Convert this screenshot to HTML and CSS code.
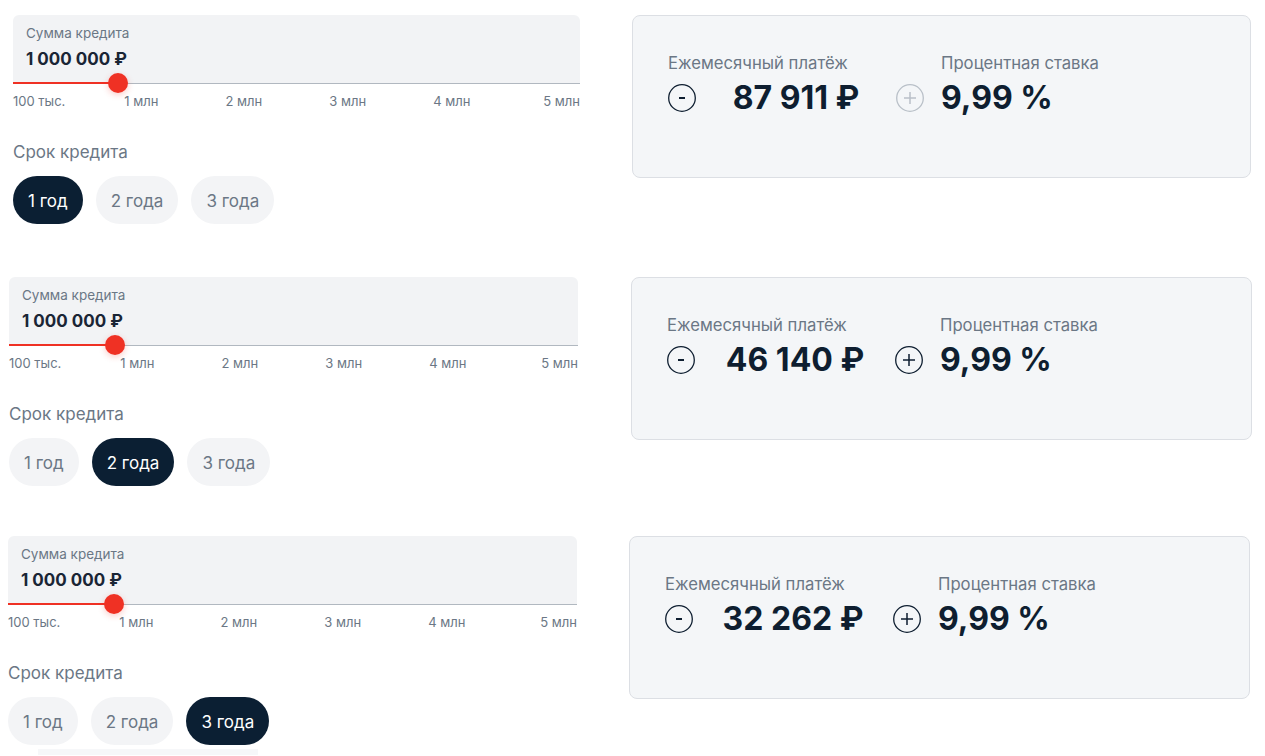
FILE: index.html
```html
<!DOCTYPE html>
<html lang="ru">
<head>
<meta charset="utf-8">
<title>Кредитный калькулятор</title>
<link rel="stylesheet" href="styles.css">
</head>
<body>
<main class="page">

  <section class="calc calc--one">
    <div class="form">
      <div class="amount">
        <div class="amount-label">Сумма кредита</div>
        <div class="amount-value">1 000 000 ₽</div>
        <div class="track"><div class="track-fill" style="width:105px"></div><div class="thumb" style="left:105px"></div></div>
      </div>
      <div class="ticks">
        <span class="tick">100 тыс.</span>
        <span class="tick tick--first">1 млн</span>
        <span class="tick">2 млн</span>
        <span class="tick">3 млн</span>
        <span class="tick">4 млн</span>
        <span class="tick tick--last">5 млн</span>
      </div>
      <div class="term-label">Срок кредита</div>
      <div class="terms">
        <button class="term term--active">1 год</button>
        <button class="term">2 года</button>
        <button class="term">3 года</button>
      </div>
    </div>
    <div class="result">
      <div class="result-col">
        <div class="result-label">Ежемесячный платёж</div>
        <div class="result-row">
          <span class="circle-btn"><svg viewBox="0 0 28 28" width="28" height="28"><circle cx="14" cy="14" r="13.3" fill="none" stroke="currentColor" stroke-width="1.3"/><path d="M11 14h6" stroke="currentColor" stroke-width="2"/></svg></span>
          <span class="result-value">87 911 ₽</span>
          <span class="circle-btn circle-btn--disabled"><svg viewBox="0 0 28 28" width="28" height="28"><circle cx="14" cy="14" r="13.3" fill="none" stroke="currentColor" stroke-width="1.3"/><path d="M14 8v12M8 14h12" stroke="currentColor" stroke-width="1.5"/></svg></span>
        </div>
      </div>
      <div class="result-col">
        <div class="result-label">Процентная ставка</div>
        <div class="result-row"><span class="rate-value">9,99 %</span></div>
      </div>
    </div>
  </section>

  <section class="calc calc--two">
    <div class="form">
      <div class="amount">
        <div class="amount-label">Сумма кредита</div>
        <div class="amount-value">1 000 000 ₽</div>
        <div class="track"><div class="track-fill" style="width:106px"></div><div class="thumb" style="left:106px"></div></div>
      </div>
      <div class="ticks">
        <span class="tick">100 тыс.</span>
        <span class="tick tick--first">1 млн</span>
        <span class="tick">2 млн</span>
        <span class="tick">3 млн</span>
        <span class="tick">4 млн</span>
        <span class="tick tick--last">5 млн</span>
      </div>
      <div class="term-label">Срок кредита</div>
      <div class="terms">
        <button class="term">1 год</button>
        <button class="term term--active">2 года</button>
        <button class="term">3 года</button>
      </div>
    </div>
    <div class="result">
      <div class="result-col">
        <div class="result-label">Ежемесячный платёж</div>
        <div class="result-row">
          <span class="circle-btn"><svg viewBox="0 0 28 28" width="28" height="28"><circle cx="14" cy="14" r="13.3" fill="none" stroke="currentColor" stroke-width="1.3"/><path d="M11 14h6" stroke="currentColor" stroke-width="2"/></svg></span>
          <span class="result-value">46 140 ₽</span>
          <span class="circle-btn"><svg viewBox="0 0 28 28" width="28" height="28"><circle cx="14" cy="14" r="13.3" fill="none" stroke="currentColor" stroke-width="1.3"/><path d="M14 8v12M8 14h12" stroke="currentColor" stroke-width="1.5"/></svg></span>
        </div>
      </div>
      <div class="result-col">
        <div class="result-label">Процентная ставка</div>
        <div class="result-row"><span class="rate-value">9,99 %</span></div>
      </div>
    </div>
  </section>

  <section class="calc calc--three">
    <div class="form">
      <div class="amount">
        <div class="amount-label">Сумма кредита</div>
        <div class="amount-value">1 000 000 ₽</div>
        <div class="track"><div class="track-fill" style="width:106px"></div><div class="thumb" style="left:106px"></div></div>
      </div>
      <div class="ticks">
        <span class="tick">100 тыс.</span>
        <span class="tick tick--first">1 млн</span>
        <span class="tick">2 млн</span>
        <span class="tick">3 млн</span>
        <span class="tick">4 млн</span>
        <span class="tick tick--last">5 млн</span>
      </div>
      <div class="term-label">Срок кредита</div>
      <div class="terms">
        <button class="term">1 год</button>
        <button class="term">2 года</button>
        <button class="term term--active">3 года</button>
      </div>
    </div>
    <div class="result">
      <div class="result-col">
        <div class="result-label">Ежемесячный платёж</div>
        <div class="result-row">
          <span class="circle-btn"><svg viewBox="0 0 28 28" width="28" height="28"><circle cx="14" cy="14" r="13.3" fill="none" stroke="currentColor" stroke-width="1.3"/><path d="M11 14h6" stroke="currentColor" stroke-width="2"/></svg></span>
          <span class="result-value">32 262 ₽</span>
          <span class="circle-btn"><svg viewBox="0 0 28 28" width="28" height="28"><circle cx="14" cy="14" r="13.3" fill="none" stroke="currentColor" stroke-width="1.3"/><path d="M14 8v12M8 14h12" stroke="currentColor" stroke-width="1.5"/></svg></span>
        </div>
      </div>
      <div class="result-col">
        <div class="result-label">Процентная ставка</div>
        <div class="result-row"><span class="rate-value">9,99 %</span></div>
      </div>
    </div>
  </section>

  <div class="stub"></div>
</main>
</body>
</html>
```

FILE: styles.css
```css
* { box-sizing: border-box; }

html, body {
  margin: 0;
  padding: 0;
  background: #ffffff;
}

body {
  font-family: Inter, "Noto Sans", "Liberation Sans", sans-serif;
  color: #0e1e30;
  overflow: hidden;
}

.page {
  display: flex;
  flex-direction: column;
  padding-top: 15px;
}

.calc {
  display: flex;
  align-items: flex-start;
}

.calc--one { padding-left: 13px; gap: 52px; margin-bottom: 53px; }
.calc--two { padding-left: 9px; gap: 53px; margin-bottom: 50px; }
.calc--three { padding-left: 8px; gap: 52px; }

.form { width: 569px; }
.calc--one .form { width: 567px; }

.amount {
  position: relative;
  height: 69px;
  padding: 10px 13px 0;
  background: #f2f3f5;
  border-radius: 6px 6px 0 0;
}

.amount-label {
  font-size: 13.5px;
  line-height: 16px;
  color: #6b7785;
}

.amount-value {
  margin-top: 7px;
  font-size: 17px;
  line-height: 22px;
  font-weight: 700;
  color: #1a2535;
}

.track {
  position: absolute;
  left: 0;
  right: 0;
  bottom: 0;
  height: 1px;
  background: #b1b8c0;
}

.track-fill {
  position: absolute;
  left: 0;
  bottom: 0;
  height: 2px;
  background: #ef3124;
}

.thumb {
  position: absolute;
  top: -10px;
  width: 20px;
  height: 20px;
  margin-left: -10px;
  border-radius: 50%;
  background: #ef3124;
  box-shadow: 0 2px 6px rgba(239, 49, 36, 0.25);
}

.ticks {
  display: flex;
  margin-top: 9px;
  font-size: 13px;
  line-height: 16px;
  color: #6b7785;
}

.tick + .tick { margin-left: 67px; }
.tick.tick--first { margin-left: 59px; }
.tick.tick--last { margin-left: auto; }

.term-label {
  margin-top: 32px;
  font-size: 17px;
  line-height: 22px;
  color: #6b7785;
}

.terms {
  display: flex;
  gap: 13px;
  margin-top: 13px;
}

.term {
  height: 48px;
  padding: 2px 15px 0;
  border: 0;
  border-radius: 24px;
  background: #f3f4f6;
  color: #6b7785;
  font-family: inherit;
  font-size: 17px;
  line-height: 20px;
}

.term--active {
  background: #0b1f33;
  color: #ffffff;
}

.result {
  display: flex;
  gap: 17px;
  width: 621px;
  height: 163px;
  padding: 37px 35px 0;
  background: #f4f6f8;
  border: 1px solid #dcdfe4;
  border-radius: 8px;
}

.calc--one .result { width: 619px; }

.result-label {
  font-size: 16.7px;
  line-height: 20px;
  color: #6b7785;
}

.result-row {
  display: flex;
  align-items: center;
  height: 40px;
  margin-top: 5px;
}

.circle-btn {
  display: flex;
  width: 28px;
  height: 28px;
  color: #0e1e30;
}

.circle-btn--disabled { color: #b9c0c8; }

.result-value {
  width: 200px;
  text-align: center;
  font-size: 32px;
  line-height: 40px;
  font-weight: 700;
}

.rate-value {
  font-size: 32px;
  line-height: 40px;
  font-weight: 700;
}

.stub {
  width: 220px;
  height: 6px;
  margin: 4px 0 0 38px;
  background: #f6f7f9;
}
```
